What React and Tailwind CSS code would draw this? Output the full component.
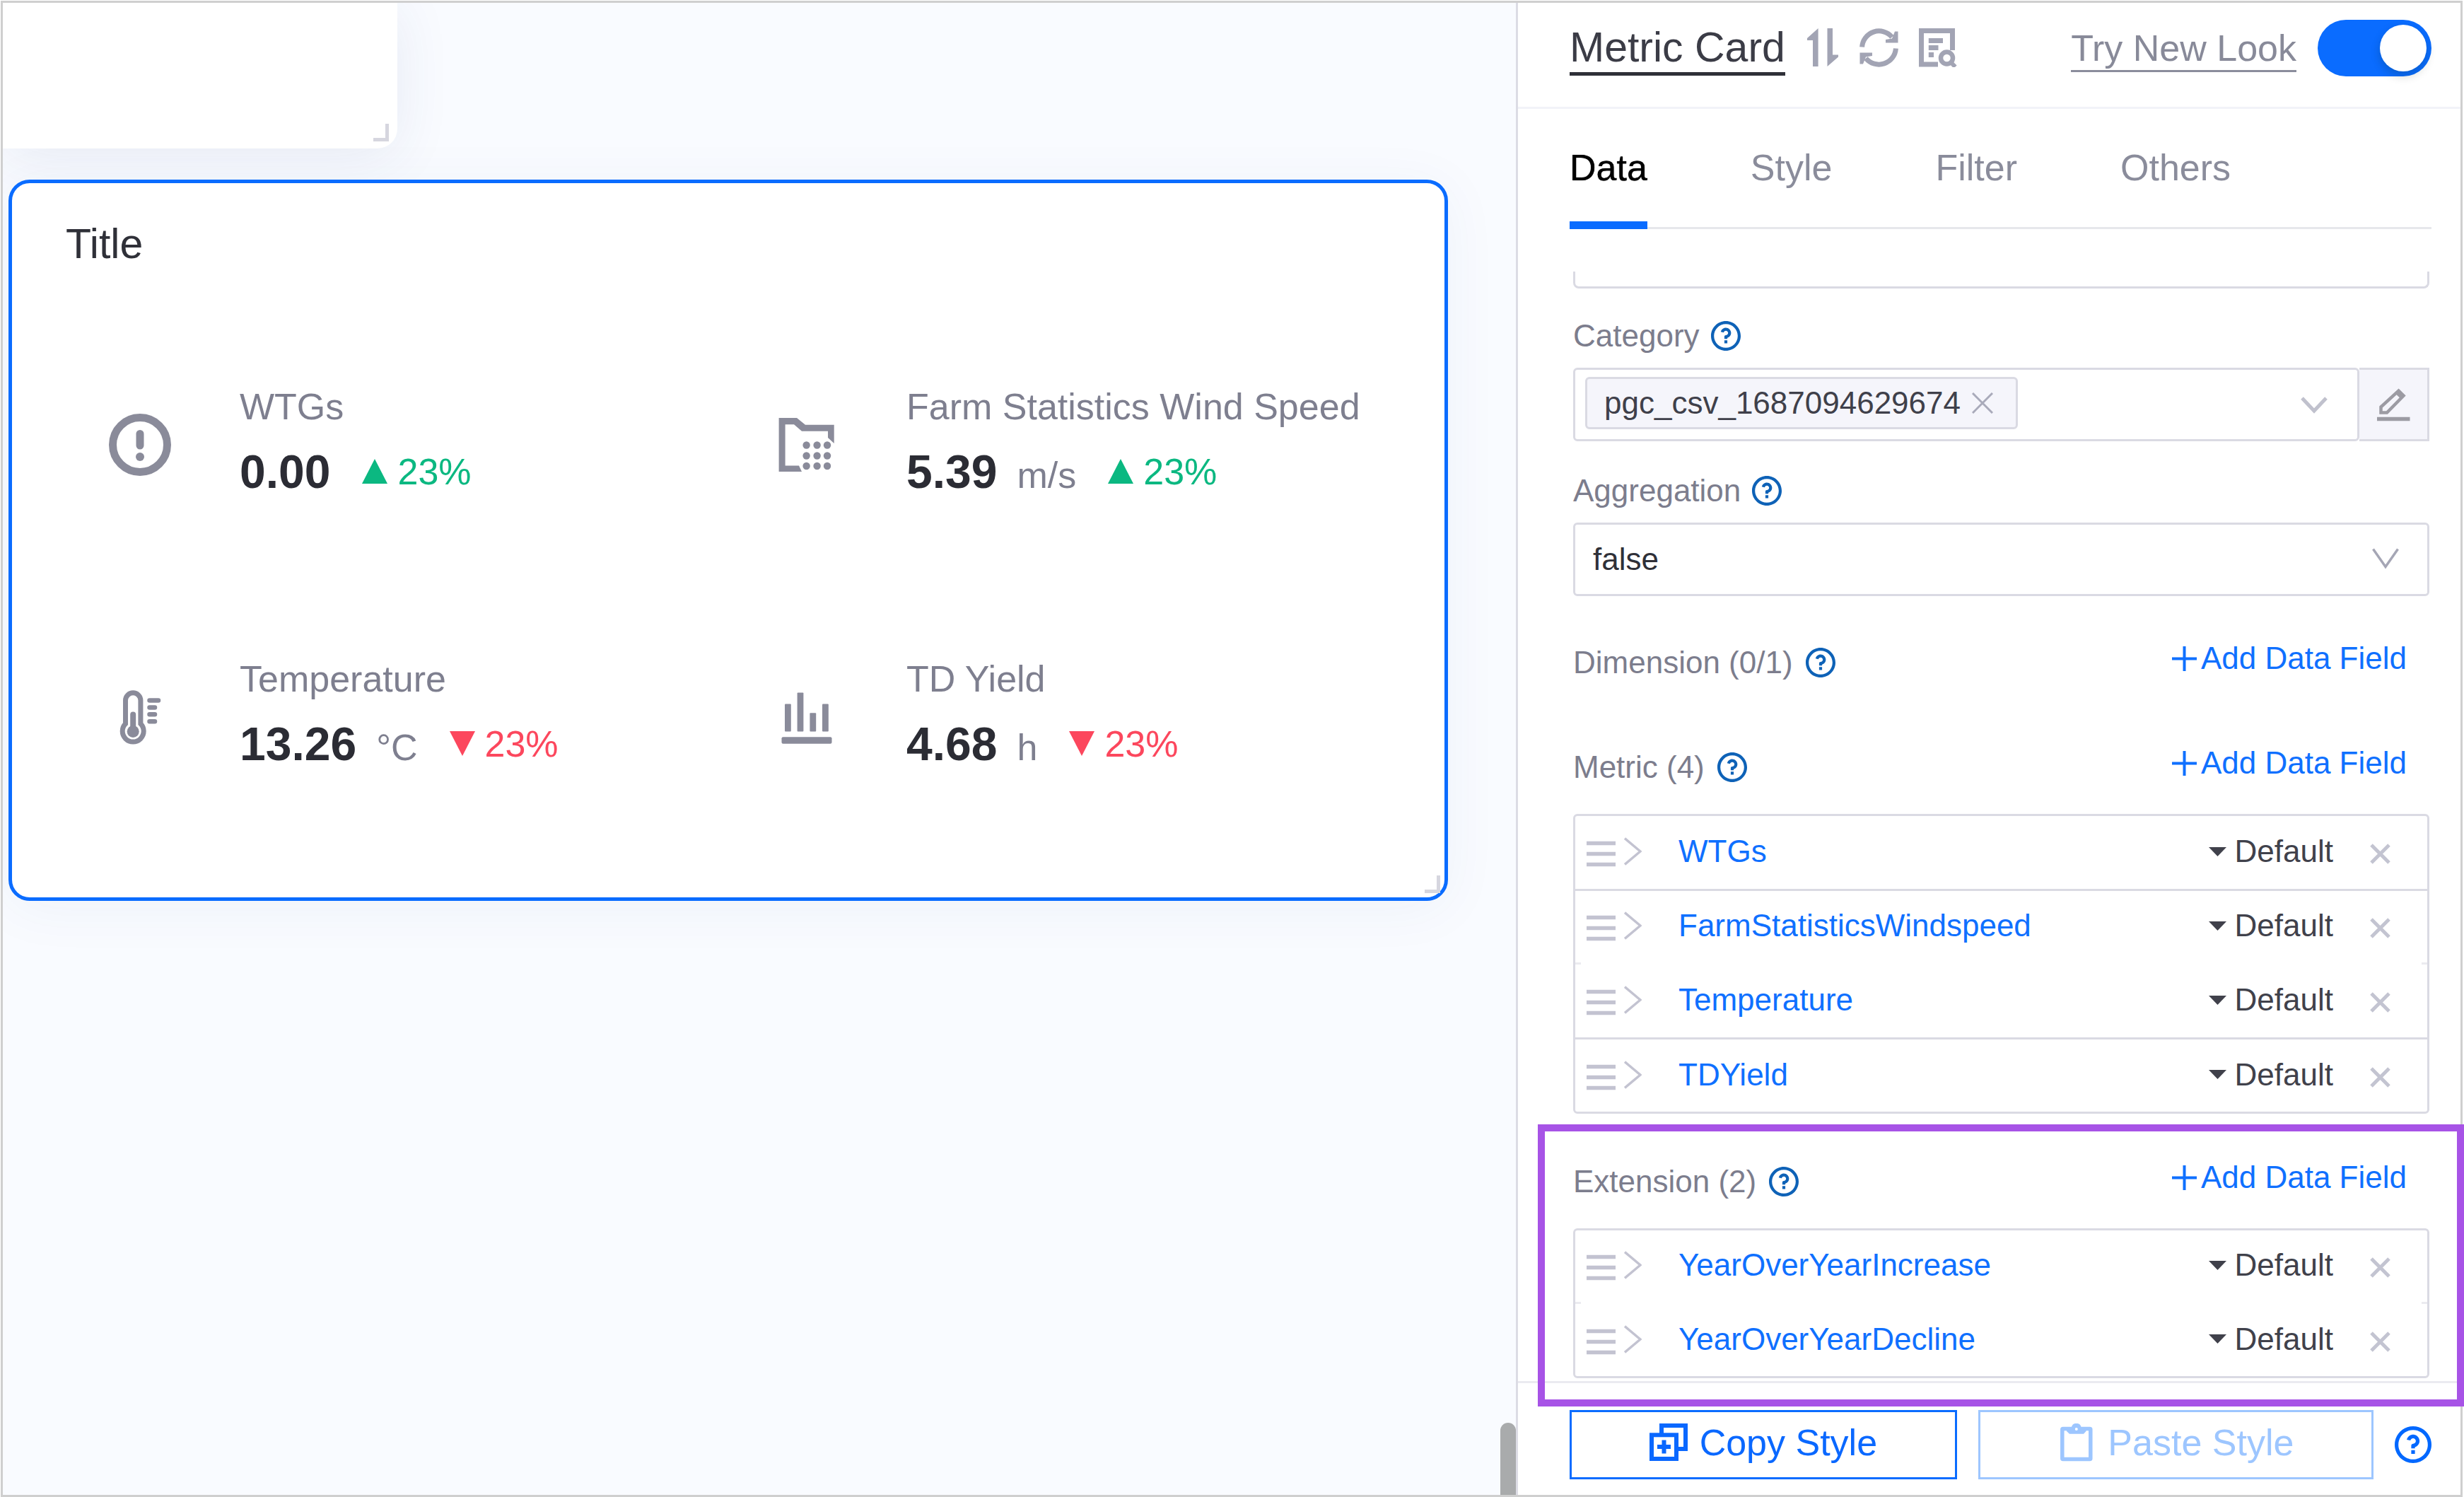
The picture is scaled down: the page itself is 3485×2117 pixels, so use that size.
import React, { useState } from 'react';
import { RiQuestionLine } from 'react-icons/ri';

const metrics = [
  { label: 'WTGs', value: '0.00', unit: '', trend: 'up', icon: AlertIcon },
  { label: 'Farm Statistics Wind Speed', value: '5.39', unit: 'm/s', trend: 'up', icon: FolderIcon },
  { label: 'Temperature', value: '13.26', unit: '°C', trend: 'down', icon: ThermometerIcon },
  { label: 'TD Yield', value: '4.68', unit: 'h', trend: 'down', icon: BarsIcon },
];

const metricFields = [
  { name: 'WTGs', divider: 'full' },
  { name: 'FarmStatisticsWindspeed', divider: 'faint' },
  { name: 'Temperature', divider: 'full' },
  { name: 'TDYield' },
];

const extensionFields = [
  { name: 'YearOverYearIncrease', divider: 'faint' },
  { name: 'YearOverYearDecline' },
];

function AlertIcon() {
  return (
    <svg className="size-[88px]" viewBox="0 0 88 88" fill="none">
      <circle cx="44" cy="44" r="38.5" stroke="currentColor" strokeWidth="11" />
      <path d="M44 28.5V45" stroke="currentColor" strokeWidth="11" strokeLinecap="round" />
      <circle cx="44" cy="61" r="6" fill="currentColor" />
    </svg>
  );
}

function FolderIcon() {
  return (
    <svg className="size-[88px]" viewBox="0 0 88 88">
      <path d="M4.6 6H30L42 15.8H82.7V42L74 34V24.8H37L26 15.2H13.6V73.5H33L37 82H4.6Z" fill="currentColor" />
      {[44.5, 59.5, 74].map((y) =>
        [43.6, 58.6, 73].map((x) => <circle key={`${x}-${y}`} cx={x} cy={y} r="5.2" fill="currentColor" />)
      )}
    </svg>
  );
}

function ThermometerIcon() {
  return (
    <svg className="size-[88px]" viewBox="0 0 88 88" fill="none" stroke="currentColor">
      <path d="M23.5 53.5V20.5a10.7 10.7 0 0 1 21.4 0V53.5A15 15 0 1 1 23.5 53.5Z" strokeWidth="7" />
      <path d="M34.2 40.5V62" strokeWidth="8" strokeLinecap="round" />
      <circle cx="34.2" cy="64.5" r="8.5" fill="currentColor" stroke="none" />
      <path d="M57.5 20.5H70M57.5 30.5H65M57.5 40.2H65M57.5 50.2H65" strokeWidth="6.5" strokeLinecap="round" />
    </svg>
  );
}

function BarsIcon() {
  return (
    <svg className="size-[88px]" viewBox="0 0 88 88" fill="currentColor">
      <rect x="13" y="25.4" width="8.8" height="39" rx="1" />
      <rect x="30.6" y="9.6" width="8.8" height="54.8" rx="1" />
      <rect x="48.4" y="38.2" width="8.8" height="26.2" rx="1" />
      <rect x="66" y="25.4" width="8.8" height="39" rx="1" />
      <rect x="8.5" y="72.3" width="71" height="9.4" rx="2" />
    </svg>
  );
}

const Chevron = ({ className, strokeWidth, d }) => (
  <svg className={className} viewBox="0 0 38 30" fill="none" stroke="currentColor" strokeWidth={strokeWidth}>
    <path d={d} />
  </svg>
);

const ResizeHandle = ({ className }) => (
  <span className={`absolute h-[25px] w-[22px] border-r-5 border-b-5 border-[#d6d6df] ${className}`} />
);

const Metric = ({ label, value, unit, trend, icon: Icon }) => (
  <div className="flex h-[385px] items-center gap-[97px] pl-[67px] text-[#8a8b9a]">
    <Icon />
    <div className="pb-2">
      <p className="text-[52px] leading-[60px] whitespace-nowrap text-[#7e7f8f]">{label}</p>
      <div className="mt-6 flex items-center gap-[45px]">
        <p className="flex items-baseline gap-7">
          <span className="text-[66px] leading-[76px] font-bold text-[#2b2c34]">{value}</span>
          {unit && <span className="text-[52px] leading-[60px] text-[#7e7f8f]">{unit}</span>}
        </p>
        <p className={`flex items-center gap-[14px] text-[52px] leading-[60px] ${trend === 'up' ? 'text-[#0bb881]' : 'text-[#fc475d]'}`}>
          <svg className="h-[35px] w-9" viewBox="0 0 36 35" fill="currentColor">
            <path d={trend === 'up' ? 'M18 0L36 35H0Z' : 'M0 0H36L18 35Z'} />
          </svg>
          23%
        </p>
      </div>
    </div>
  </div>
);

const Help = () => <RiQuestionLine viewBox="2 2 20 20" className="size-[42px] text-[#0e62b7]" />;

const FieldLabel = ({ htmlFor, children }) => (
  <div className="flex items-center gap-4">
    <label htmlFor={htmlFor} className="text-[44px] leading-[52px] text-[#7c7d8d]">{children}</label>
    <Help />
  </div>
);

const SectionHead = ({ title }) => (
  <div className="flex items-start justify-between pr-8">
    <div className="flex items-center gap-[18px] pt-1.5">
      <h3 className="text-[44px] leading-[52px] text-[#7c7d8d]">{title}</h3>
      <Help />
    </div>
    <button className="flex items-center gap-1.5 text-[44px] leading-[52px] text-[#0f70ff]">
      <svg className="size-[35px]" viewBox="0 0 35 35" stroke="currentColor" strokeWidth="4">
        <path d="M17.5 0V35M0 17.5H35" />
      </svg>
      Add Data Field
    </button>
  </div>
);

const FieldRow = ({ name, divider }) => (
  <li>
    <div className={`flex items-center pr-[52px] pb-[3px] pl-4 text-[44px] leading-[52px] ${divider === 'full' ? 'h-[103px]' : divider === 'faint' ? 'h-[101px]' : 'h-[102px]'}`}>
      <svg className="h-11 w-[41px] text-[#c3c3d1]" viewBox="0 0 41 44" stroke="currentColor" strokeWidth="5.5">
        <path d="M0 10.5H41M0 25.5H41M0 40.5H41" />
      </svg>
      <button aria-label={`Expand ${name}`} className="ml-3 text-[#c3c3d1]">
        <svg className="h-10 w-[25px]" viewBox="0 0 25 40" fill="none" stroke="currentColor" strokeWidth="3.5">
          <path d="M1 1.5L23 20L1 38.5" />
        </svg>
      </button>
      <a href="#field" className="ml-[52px] text-[#0f70ff]">{name}</a>
      <button className="ml-auto flex items-center gap-3 text-[#40414b]">
        <svg className="h-[13px] w-[25px]" viewBox="0 0 25 13" fill="currentColor">
          <path d="M0 0H25L12.5 13Z" />
        </svg>
        Default
      </button>
      <button aria-label={`Remove ${name}`} className="ml-[52px] text-[#c3c4d1]">
        <svg className="h-9 w-[29px]" viewBox="0 0 29 36" stroke="currentColor" strokeWidth="5">
          <path d="M2 9L27 34M27 9L2 34" />
        </svg>
      </button>
    </div>
    {divider === 'full' && <div className="h-[3px] bg-[#dadae3]" />}
    {divider === 'faint' && (
      <div className="flex h-[3px] justify-between">
        <span className="w-2 bg-[#ebebf0]" />
        <span className="w-2 bg-[#ebebf0]" />
      </div>
    )}
  </li>
);

const FieldList = ({ fields }) => (
  <ul className="rounded-md border-3 border-[#dadae3]">
    {fields.map((field) => <FieldRow key={field.name} {...field} />)}
  </ul>
);

const Canvas = () => (
  <main className="relative min-w-0 flex-1 overflow-hidden bg-[#f9fbff]">
    <div className="relative h-[206px] w-[558px] rounded-br-[28px] bg-white shadow-[0_10px_80px_rgba(40,70,130,0.09)]">
      <ResizeHandle className="right-3 bottom-2.5" />
    </div>
    <section className="relative mt-11 mr-24 ml-2 rounded-[30px] border-5 border-[#0a6cff] bg-white px-[70px] pt-[54px] pb-[63px] shadow-[0_10px_80px_rgba(40,70,130,0.05)]">
      <h2 className="pl-1.5 text-[59px] leading-[64px] text-[#2f3038]">Title</h2>
      <div className="mt-[59px] grid grid-cols-2">
        {metrics.map((metric) => <Metric key={metric.label} {...metric} />)}
      </div>
      <ResizeHandle className="right-1.5 bottom-1.5" />
    </section>
    <div className="absolute right-0 bottom-0 h-[102px] w-[22px] rounded-t-full bg-[#a9abac]" />
  </main>
);

const PanelHeader = () => {
  const [newLook, setNewLook] = useState(true);

  return (
    <header className="flex h-[150px] items-center border-b-3 border-[#f2f3f8] pr-[41px] pb-5 pl-[73px]">
      <h1 className="border-b-5 border-[#2f3038] pt-1 text-[59px] leading-[70px] text-[#3b3c46]">Metric Card</h1>
      <div className="ml-[30px] flex items-center gap-[29px] text-[#a2a4b4]">
        <button aria-label="Switch">
          <svg className="h-[55px] w-[46px]" viewBox="0 0 44 55" fill="currentColor">
            <path d="M15.6 0V54H8V17H0V14Z" />
            <path d="M28.5 0H36V37.5H44V40.5L28.5 54Z" />
          </svg>
        </button>
        <button aria-label="Refresh">
          <svg className="size-[55px]" viewBox="0 0 55 55" fill="none" stroke="currentColor" strokeWidth="7">
            <path d="M3.6 26.5A24 24 0 0 1 46 12.5" />
            <path d="M54.5 4.5V20.5H37V16L46 14.5L50 4.5Z" fill="currentColor" stroke="none" />
            <path d="M51.4 28.5A24 24 0 0 1 9 42.5" />
            <path d="M0.5 50.5V34.5H18V39L9 40.5L5 50.5Z" fill="currentColor" stroke="none" />
          </svg>
        </button>
        <button aria-label="Preview data">
          <svg className="size-[55px]" viewBox="0 0 55 55" fill="none" stroke="currentColor" strokeWidth="7">
            <path d="M27 51H3.5V3.5H47.5V31" />
            <path d="M13.8 17.5H34M13.8 27.5H27.5M13.8 37.5H21" />
            <circle cx="39.5" cy="42" r="8.5" strokeWidth="6.5" />
            <path d="M45 48L51.5 54.5" strokeWidth="6" />
          </svg>
        </button>
      </div>
      <label htmlFor="new-look" className="ml-auto border-b-3 border-[#8b8d9c] pt-1 text-[52px] leading-[62px] text-[#888a99]">Try New Look</label>
      <input
        id="new-look"
        type="checkbox"
        role="switch"
        checked={newLook}
        onChange={() => setNewLook(!newLook)}
        className="ml-[30px] flex h-20 w-[161px] appearance-none items-center rounded-full bg-gray-300 px-[7px] before:size-[66px] before:rounded-full before:bg-white before:shadow-[0_6px_14px_rgba(0,35,11,0.2)] checked:justify-end checked:bg-[#0a6cff]"
      />
    </header>
  );
};

const PanelTabs = () => {
  const [active, setActive] = useState('Data');

  return (
    <nav className="mr-[41px] ml-[73px] flex gap-[146px] border-b-3 border-[#e6e7eb] pt-[53px]">
      {['Data', 'Style', 'Filter', 'Others'].map((tab) => (
        <button
          key={tab}
          onClick={() => setActive(tab)}
          className={`-mb-[3px] border-b-11 pb-[46px] text-[52px] leading-[60px] ${tab === active ? 'border-[#0a6cff] text-black [text-shadow:0_0_1px_currentColor]' : 'border-transparent text-[#8a8c9b]'}`}
        >
          {tab}
        </button>
      ))}
    </nav>
  );
};

const PanelForm = () => (
  <div className="flex-1 pt-[60px] pr-11 pl-[78px]">
    <div className="h-6 rounded-b-lg border-x-3 border-b-3 border-[#dadae3]" />

    <div className="mt-[41px]">
      <FieldLabel htmlFor="category">Category</FieldLabel>
      <div className="mt-[19px] flex h-[104px]">
        <div className="flex min-w-0 flex-1 items-center rounded-md border-3 border-[#dadae3] pr-[42px] pl-3.5">
          <span className="-mt-1 flex h-[74px] items-center gap-4 rounded-md border-3 border-[#dadae3] bg-[#f5f5fb] pr-8 pl-6 text-[44px] leading-[52px] text-[#3f404a]">
            pgc_csv_1687094629674
            <button aria-label="Remove category" className="text-[#a9aaba]">
              <svg className="size-[30px]" viewBox="0 0 30 30" stroke="currentColor" strokeWidth="3">
                <path d="M1 1L29 29M29 1L1 29" />
              </svg>
            </button>
          </span>
          <input id="category" type="text" className="min-w-0 flex-1 text-[44px] outline-none" />
          <Chevron className="h-[30px] w-[38px] text-[#c0c1cd]" strokeWidth="5" d="M2 6L19 24L36 6" />
        </div>
        <button aria-label="Edit category" className="flex w-[99px] items-center justify-center border-3 border-l-0 border-[#dadae3] bg-[#f5f5fb] text-[#9c9ba3]">
          <svg className="size-[47px]" viewBox="0 0 47 47" fill="none" stroke="currentColor" strokeWidth="4.5">
            <path d="M30.5 3.5L37.5 10.5L14 34.5H5.5V26.5Z" />
            <path d="M27.5 6L35 13" />
            <path d="M0 43.5H46.5" strokeWidth="5.5" />
          </svg>
        </button>
      </div>
    </div>

    <div className="mt-11">
      <FieldLabel htmlFor="aggregation">Aggregation</FieldLabel>
      <div className="relative mt-[19px]">
        <select id="aggregation" defaultValue="false" className="block h-[104px] w-full appearance-none rounded-md border-3 border-[#dadae3] bg-white pl-[25px] text-[44px] leading-[52px] text-[#2f3038]">
          <option>false</option>
          <option>true</option>
        </select>
        <Chevron className="pointer-events-none absolute top-9 right-[43px] h-[30px] w-[38px] text-[#a5a6b5]" strokeWidth="3.5" d="M1.5 1.5L19 26.5L36.5 1.5" />
      </div>
    </div>

    <section className="mt-[62px]">
      <SectionHead title="Dimension (0/1)" />
    </section>

    <section className="mt-[90px] flex flex-col gap-10">
      <SectionHead title="Metric (4)" />
      <FieldList fields={metricFields} />
    </section>

    <section className="relative mt-16 flex flex-col gap-10">
      <SectionHead title="Extension (2)" />
      <FieldList fields={extensionFields} />
      {/* highlight frame around the extension block */}
      <div className="pointer-events-none absolute -top-[49px] -right-[49px] -bottom-10 -left-[50px] z-10 border-10 border-[#a753e6]" />
    </section>
  </div>
);

const PanelFooter = () => (
  <footer className="flex items-center gap-[30px] border-t-3 border-[#ebebf0] pt-[38px] pr-[41px] pb-[22px] pl-[73px]">
    <button className="flex h-[98px] flex-auto items-center justify-center gap-[17px] border-3 border-[#0a6cff] pb-1.5 text-[52px] leading-[60px] text-[#0a68ff]">
      <svg className="size-[54px]" viewBox="0 0 54 54" fill="none" stroke="currentColor" strokeWidth="6">
        <rect x="3" y="16.3" width="35" height="33.7" />
        <path d="M17 14V3H51V36H40" />
        <path d="M20.5 23.5V42.5M11 33H30" />
      </svg>
      Copy Style
    </button>
    <button disabled className="flex h-[98px] flex-auto items-center justify-center gap-[17px] border-3 border-[#9dc6ff] pb-1.5 text-[52px] leading-[60px] text-[#9dc6ff]">
      <svg className="size-[54px]" viewBox="-4 0 54 54" fill="none">
        <rect x="2.8" y="7.5" width="40" height="43" rx="1" stroke="currentColor" strokeWidth="5.5" />
        <path d="M9 5H16A7 7 0 0 1 29.5 5H36.5V11L33 14.7H13L9 11Z" fill="currentColor" />
        <circle cx="22.8" cy="8" r="2" fill="white" />
      </svg>
      Paste Style
    </button>
    <button aria-label="Help" className="text-[#0068ff]">
      <RiQuestionLine viewBox="2 2 20 20" className="size-[52px]" />
    </button>
  </footer>
);

const App = () => {
  return (
    <div className="flex min-h-screen bg-white pt-px pr-0.5 pl-px font-['Liberation_Sans',Arial,sans-serif]">
      <div className="flex flex-1 border-3 border-[#cfcfcf]">
        <Canvas />
        <aside className="flex w-[1336px] shrink-0 flex-col border-l-3 border-[#dcdce5] bg-white">
          <PanelHeader />
          <PanelTabs />
          <PanelForm />
          <PanelFooter />
        </aside>
      </div>
    </div>
  );
};

export default App;
